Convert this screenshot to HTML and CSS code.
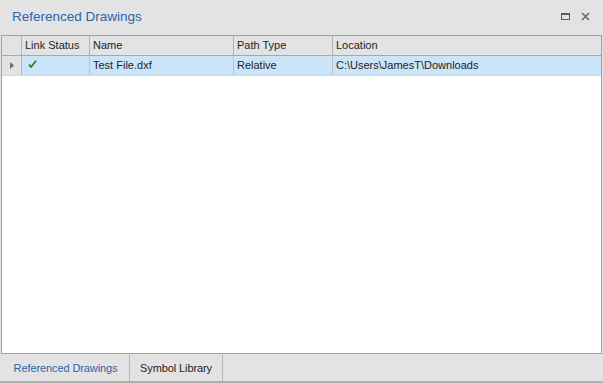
FILE: index.html
```html
<!DOCTYPE html>
<html lang="en">
<head>
    <meta charset="UTF-8">
    <title>Referenced Drawings</title>
    <link rel="stylesheet" href="styles.css">
</head>
<body>
<div class="panel">
    <div class="titlebar">
        <span class="title">Referenced Drawings</span>
        <div class="buttons">
            <svg class="btn" width="10" height="8" viewBox="0 0 10 8">
                <rect x="0.5" y="0.5" width="8" height="6" fill="none" stroke="#5a5a5a" stroke-width="1"/>
                <rect x="0" y="0" width="9" height="2" fill="#5a5a5a"/>
            </svg>
            <svg class="btn" width="9" height="9" viewBox="0 0 9 9">
                <path d="M1 1 L8 8 M8 1 L1 8" stroke="#6a6a6a" stroke-width="1.6"/>
            </svg>
        </div>
    </div>
    <div class="grid">
        <div class="row head">
            <div class="cell ind"></div>
            <div class="cell">Link Status</div>
            <div class="cell">Name</div>
            <div class="cell">Path Type</div>
            <div class="cell last">Location</div>
        </div>
        <div class="row sel">
            <div class="cell ind">
                <svg width="4" height="7" viewBox="0 0 4 7"><path d="M0 0 L4 3.5 L0 7 Z" fill="#6d6d6d"/></svg>
            </div>
            <div class="cell">
                <svg class="check" width="9" height="8" viewBox="0 0 9 8">
                    <path d="M1 4.5 L3 7 L8 0.8" fill="none" stroke="#1e8a1e" stroke-width="1.8"/>
                </svg>
            </div>
            <div class="cell">Test File.dxf</div>
            <div class="cell">Relative</div>
            <div class="cell last">C:\Users\JamesT\Downloads</div>
        </div>
    </div>
    <div class="tabs">
        <div class="tab active">Referenced Drawings</div>
        <div class="tab lib">Symbol Library</div>
    </div>
</div>
</body>
</html>
```
FILE: styles.css
```css
*{
    margin: 0;
    padding: 0;
    box-sizing: border-box;
}
body{
    background: #e3e3e3;
    font-family: "Liberation Sans", Arial, sans-serif;
    font-size: 11px;
    color: #1e1e1e;
}
.panel{
    width: 603px;
    height: 383px;
    display: flex;
    flex-direction: column;
}
.titlebar{
    height: 35px;
    display: flex;
    align-items: center;
    padding: 0 13px 2px 12px;
}
.title{
    font-size: 13.5px;
    color: #2b63ad;
    flex: 1;
}
.buttons{
    display: flex;
    align-items: center;
    gap: 10px;
}
.grid{
    height: 319px;
    margin: 0 1px;
    border: 1px solid #a3a3a3;
    background: #fff;
}
.row{
    display: grid;
    grid-template-columns: 20px 68px 144px 99px 1fr;
    height: 20px;
    border-bottom: 1px solid #bdbdbd;
}
.head{
    background: #e3e3e3;
    border-bottom-color: #a8a8a8;
}
.sel{
    background: #cce4f7;
    border-bottom-color: #d7d7d7;
}
.cell{
    border-right: 1px solid #c2c2c2;
    padding-left: 3px;
    line-height: 19px;
    white-space: nowrap;
}
.head .cell{
    border-right-color: #b3b3b3;
}
.cell.ind{
    padding-left: 0;
    display: flex;
    align-items: center;
    justify-content: center;
    background: #e3e3e3;
    border-right-color: #b3b3b3;
}
.cell.last{
    border-right: none;
}
.check{
    margin: 4px 0 0 3px;
    display: block;
}
.tabs{
    height: 29px;
    display: flex;
    padding-left: 2px;
    border-bottom: 2px solid #b0b0b0;
}
.tab{
    width: 128px;
    text-align: center;
    line-height: 27px;
    border-right: 1px solid #b8b8b8;
    margin: 1px 0 0;
    letter-spacing: -0.1px;
}
.tab.lib{
    width: 93px;
}
.tab.active{
    color: #2b63ad;
}
```
